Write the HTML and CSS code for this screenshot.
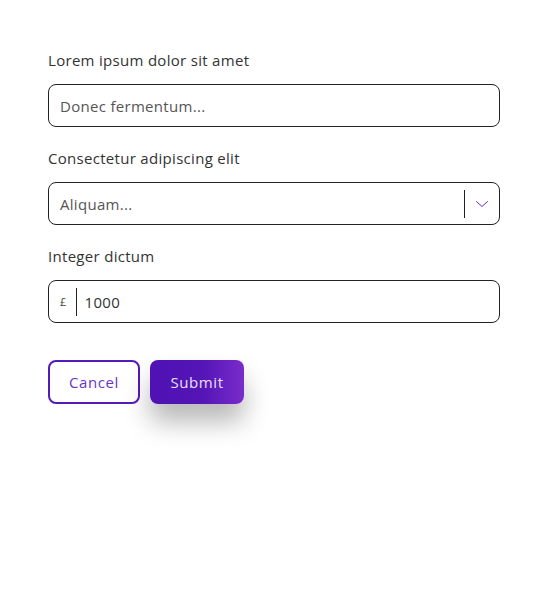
FILE: index.html
```html
<!DOCTYPE html>
<html lang="en">
<head>
  <meta charset="UTF-8">
  <meta name="viewport" content="width=device-width, initial-scale=1.0">
  <title>Form</title>
  <link rel="stylesheet" href="styles.css">
</head>
<body>
  <form class="form">
    <div class="field">
      <label class="label" for="name">Lorem ipsum dolor sit amet</label>
      <div class="control">
        <input id="name" class="input" type="text" placeholder="Donec fermentum...">
      </div>
    </div>

    <div class="field">
      <label class="label" for="choice">Consectetur adipiscing elit</label>
      <div class="control select">
        <span class="select-value" id="choice">Aliquam...</span>
        <span class="divider"></span>
        <span class="chevron">
          <svg width="14" height="8" viewBox="0 0 14 8" fill="none">
            <path d="M1.5 1.5l5.5 5 5.5-5" stroke="#6a2ad0" stroke-width="1" stroke-linecap="round" stroke-linejoin="round"/>
          </svg>
        </span>
      </div>
    </div>

    <div class="field">
      <label class="label" for="amount">Integer dictum</label>
      <div class="control amount">
        <span class="prefix">£</span>
        <span class="divider"></span>
        <input id="amount" class="input" type="text" value="1000">
      </div>
    </div>

    <div class="actions">
      <button type="button" class="btn btn-cancel">Cancel</button>
      <button type="button" class="btn btn-submit">Submit</button>
    </div>
  </form>
</body>
</html>
```

FILE: styles.css
```css
body {
  margin: 0;
  padding: 0;
  background: #fff;
  font-family: "Open Sans", "Noto Sans", sans-serif;
  letter-spacing: 0.3px;
  color: #333;
}

.form {
  width: 452px;
  padding: 50px 48px;
}

.field {
  margin-bottom: 21px;
}

.label {
  display: block;
  font-size: 15px;
  line-height: 20px;
  color: #333;
  margin-bottom: 14px;
}

.control {
  height: 41px;
  border: 1px solid #222;
  border-radius: 8px;
  display: flex;
  align-items: center;
  background: #fff;
}

.input {
  flex: 1;
  border: none;
  outline: none;
  background: transparent;
  font-family: inherit;
  letter-spacing: inherit;
  font-size: 15px;
  color: #333;
  padding: 0 11px;
  height: 100%;
}

.input::placeholder {
  color: #555;
}

.select {
  padding-left: 11px;
}

.select-value {
  flex: 1;
  font-size: 15px;
  color: #555;
}

.divider {
  width: 1px;
  height: 28px;
  background: #222;
}

.chevron {
  width: 34px;
  display: flex;
  justify-content: center;
  align-items: center;
}

.amount .prefix {
  font-size: 11px;
  color: #444;
  padding: 0 9px 0 11px;
}

.amount .input {
  padding-left: 8px;
}

.actions {
  display: flex;
  gap: 10px;
  margin-top: 37px;
}

.btn {
  height: 44px;
  border-radius: 8px;
  font-family: inherit;
  letter-spacing: 0.6px;
  font-size: 15px;
  cursor: pointer;
}

.btn-cancel {
  width: 92px;
  background: #fff;
  border: 2px solid #5619bd;
  color: #6a34c6;
}

.btn-submit {
  width: 94px;
  border: none;
  color: #e9e0f7;
  background: linear-gradient(90deg, #5012b4 0%, #5414b6 55%, #7a2ccb 100%);
  box-shadow: 0 18px 26px rgba(0, 0, 0, 0.28);
}
```
